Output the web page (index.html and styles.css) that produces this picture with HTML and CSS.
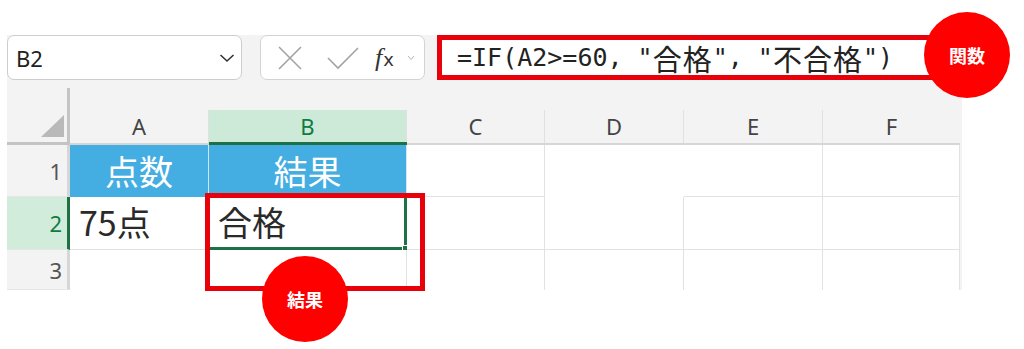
FILE: index.html
```html
<!DOCTYPE html>
<html lang="ja">
<head>
    <meta charset="UTF-8">
    <meta name="viewport" content="width=device-width, initial-scale=1.0">
    <title>IF関数</title>
    <link rel="stylesheet" href="styles.css">
</head>
<body>
    <div id="page">
        <div id="sheet">
            <!-- 数式バー -->
            <div class="fbar">
                <div class="namebox">
                    <span>B2</span>
                    <svg width="16" height="10" viewBox="0 0 16 10"><polyline points="1.5,2 8,8 14.5,2" fill="none" stroke="#333" stroke-width="1.6"/></svg>
                </div>
                <div class="fxbox">
                    <svg width="26" height="24" viewBox="0 0 26 24"><path d="M2 1 L24 23 M24 1 L2 23" stroke="#a3a3a3" stroke-width="1.6" fill="none"/></svg>
                    <svg width="32" height="24" viewBox="0 0 32 24"><polyline points="1,12 11,22 31,2" stroke="#a3a3a3" stroke-width="1.6" fill="none"/></svg>
                    <span class="fx"><i>f</i><span>x</span></span>
                    <svg width="8" height="6" viewBox="0 0 8 6"><polyline points="1,1 4,4.5 7,1" fill="none" stroke="#b5b5b5" stroke-width="1"/></svg>
                </div>
                <div class="formula">=IF(A2&gt;=60, "<span class="jp">合格</span>", "<span class="jp">不合格</span>")</div>
            </div>

            <!-- シート -->
            <div class="grid">
                <div class="corner"><span class="tri"></span></div>
                <div class="colh"><span>A</span></div>
                <div class="colh sel"><span>B</span></div>
                <div class="colh"><span>C</span></div>
                <div class="colh"><span>D</span></div>
                <div class="colh"><span>E</span></div>
                <div class="colh last"><span>F</span></div>

                <div class="rowh">1</div>
                <div class="cell head">点数</div>
                <div class="cell head">結果</div>
                <div class="cell"></div>
                <div class="cell nob nor"></div>
                <div class="cell"></div>
                <div class="cell"></div>

                <div class="rowh sel">2</div>
                <div class="cell val">75点</div>
                <div class="cell val active">合格<i class="handle"></i></div>
                <div class="cell"></div>
                <div class="cell"></div>
                <div class="cell"></div>
                <div class="cell"></div>

                <div class="rowh">3</div>
                <div class="cell nob"></div>
                <div class="cell nob"></div>
                <div class="cell nob"></div>
                <div class="cell nob"></div>
                <div class="cell nob"></div>
                <div class="cell nob"></div>
            </div>
        </div>

        <!-- 注釈 -->
        <div class="mark mark-res"></div>
        <div class="badge badge-fx">関数</div>
        <div class="badge badge-res">結果</div>
    </div>
</body>
</html>
```

FILE: styles.css
```css
*{
    margin: 0;
    padding: 0;
    box-sizing: border-box;
}
body{
    background: #ffffff;
    font-family: "Noto Sans", "Noto Sans CJK JP", sans-serif;
}
#page{
    position: relative;
    width: 1024px;
    height: 349px;
    padding: 35px 0 0 7px;
}
#sheet{
    width: 955px;
    background: #f3f3f3;
}

/* 数式バー */
.fbar{
    display: flex;
    height: 45px;
    align-items: stretch;
}
.namebox{
    width: 235px;
    background: #ffffff;
    border: 1px solid #cdcdcd;
    border-radius: 7px;
    display: flex;
    align-items: center;
    justify-content: space-between;
    padding: 0 6px 0 8px;
    font-size: 22px;
    color: #222;
}
.fxbox{
    width: 165px;
    margin-left: 18px;
    background: #ffffff;
    border: 1px solid #d3d3d3;
    border-radius: 7px;
    display: flex;
    align-items: center;
    padding: 0 7px 0 16px;
}
.fxbox svg:nth-child(2){
    margin-left: 24px;
}
.fx{
    margin-left: 16px;
    font-family: "Liberation Serif", serif;
    font-size: 26px;
    color: #333;
    line-height: 1;
}
.fx span{
    font-family: "DejaVu Sans", sans-serif;
    font-size: 18px;
    margin-left: 1px;
}
.fxbox svg:last-child{
    margin-left: 13px;
}
.formula{
    width: 497px;
    margin-left: 12px;
    background: #ffffff;
    border: 5px solid #e8000b;
    padding-left: 15px;
    display: flex;
    align-items: center;
    white-space: pre;
    font-family: "DejaVu Sans Mono", "Noto Sans CJK JP", monospace;
    font-size: 25px;
    color: #222;
}
.formula .jp{
    font-family: "Noto Sans CJK JP", sans-serif;
    font-size: 29px;
    letter-spacing: 1px;
}

/* シート */
.grid{
    margin-top: 8px;
    display: grid;
    grid-template-columns: 63px 139px 198px 138px 139px 139px 137px;
    grid-template-rows: 57px 52px 53px 40px;
    width: 953px;
}
.corner{
    border-right: 3px solid #c4c4c4;
    border-bottom: 3px solid #c4c4c4;
    display: flex;
    align-items: flex-end;
    justify-content: flex-end;
    padding: 0 3px 5px 0;
}
.tri{
    width: 23px;
    height: 22px;
    background: #b9b9b9;
    clip-path: polygon(100% 0, 100% 100%, 0 100%);
}
.colh{
    display: flex;
    flex-direction: column;
    justify-content: flex-end;
    border-bottom: 2px solid #d6d6d6;
}
.colh span{
    height: 33px;
    border-right: 1px solid #e0e0e0;
    text-align: center;
    line-height: 33px;
    font-size: 22px;
    color: #444;
}
.colh.last span{
    border-right: none;
}
.colh.sel{
    border-bottom: 3px solid #1e7145;
}
.colh.sel span{
    height: 32px;
    background: #cde9d8;
    color: #107c41;
}
.rowh{
    background: #f3f3f3;
    border-right: 3px solid #d6d6d6;
    border-bottom: 1px solid #e6e6e6;
    padding-right: 5px;
    font-size: 22px;
    color: #555;
    display: flex;
    align-items: center;
    justify-content: flex-end;
}
.rowh.sel{
    background: #d2ecdc;
    color: #107c41;
    border-right-color: #1e7145;
}
.cell{
    position: relative;
    background: #ffffff;
    border-right: 1px solid #e2e2e2;
    border-bottom: 1px solid #e2e2e2;
    font-family: "Noto Sans CJK JP", sans-serif;
}
.cell.nob{
    border-bottom: none;
}
.cell.nor{
    border-right: none;
}
.cell.head{
    background: #44ade2;
    border-right-color: #cfe6f3;
    border-bottom: none;
    color: #ffffff;
    font-size: 34px;
    line-height: 52px;
    text-align: center;
}
.cell.val{
    font-size: 34px;
    line-height: 50px;
    padding-left: 9px;
    color: #2a2a2a;
}
.cell.active{
    border-right: 3px solid #1e7145;
    border-bottom: 3px solid #1e7145;
}
.handle{
    position: absolute;
    right: -6px;
    bottom: -6px;
    width: 8px;
    height: 8px;
    background: #1e7145;
    border: 1px solid #ffffff;
}

/* 注釈 */
.mark{
    position: absolute;
    border: 5px solid #e8000b;
}
.mark-res{
    left: 205px;
    top: 193px;
    width: 220px;
    height: 98px;
}
.badge{
    position: absolute;
    width: 86px;
    height: 86px;
    border-radius: 50%;
    background: #ff0000;
    color: #ffffff;
    font-family: "Noto Sans CJK JP", sans-serif;
    font-weight: bold;
    font-size: 18px;
    display: flex;
    align-items: center;
    justify-content: center;
}
.badge-fx{
    left: 924px;
    top: 12px;
}
.badge-res{
    left: 262px;
    top: 256px;
}
```
